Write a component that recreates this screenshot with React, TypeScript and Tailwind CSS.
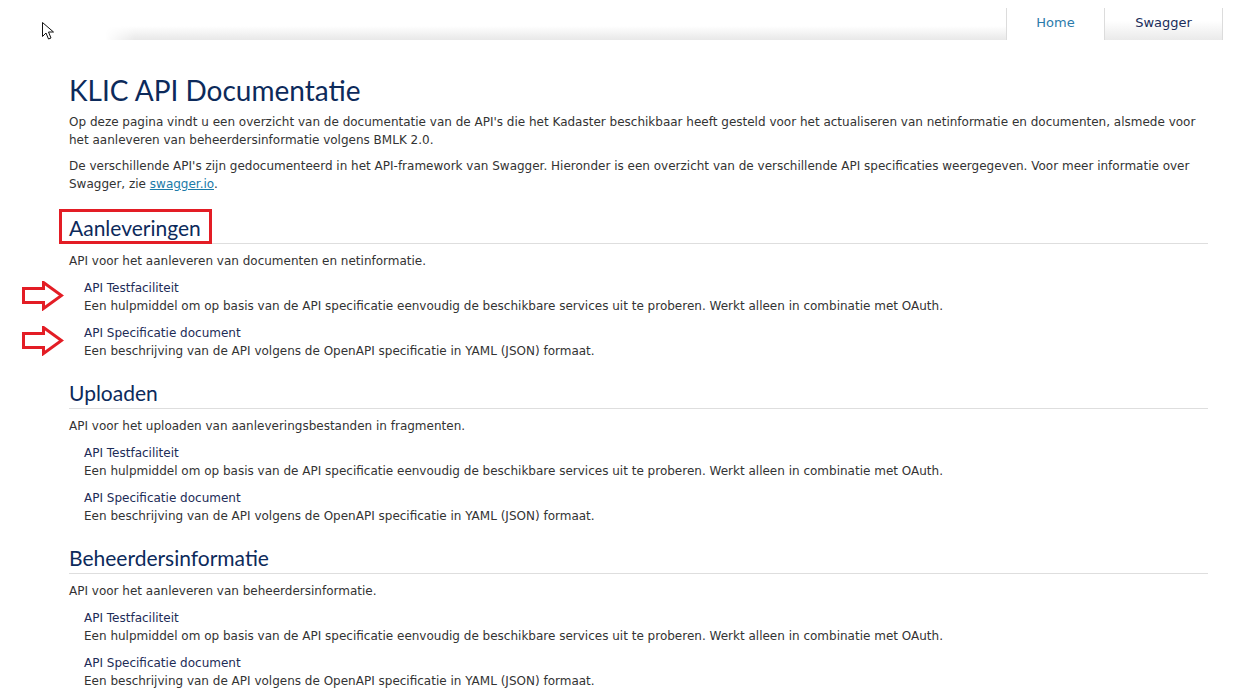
const body = { fontFamily: '"DejaVu Sans", Verdana, sans-serif' };
const heading = { fontFamily: 'Lato, "Open Sans", sans-serif' };

type Api = { title: string; desc: string };

type Section = {
  heading: string;
  intro: string;
  marked?: boolean;
};

const apis: Api[] = [
  {
    title: "API Testfaciliteit",
    desc: "Een hulpmiddel om op basis van de API specificatie eenvoudig de beschikbare services uit te proberen. Werkt alleen in combinatie met OAuth.",
  },
  {
    title: "API Specificatie document",
    desc: "Een beschrijving van de API volgens de OpenAPI specificatie in YAML (JSON) formaat.",
  },
];

const sections: Section[] = [
  { heading: "Aanleveringen", intro: "API voor het aanleveren van documenten en netinformatie.", marked: true },
  { heading: "Uploaden", intro: "API voor het uploaden van aanleveringsbestanden in fragmenten." },
  { heading: "Beheerdersinformatie", intro: "API voor het aanleveren van beheerdersinformatie." },
];

function RedArrow() {
  return (
    <svg width="42" height="30" viewBox="0 0 42 30" className="absolute left-[-47px] top-[2px]">
      <polygon
        points="1.5,7.5 21.5,7.5 21.5,1.5 39.5,14.5 21.5,27.5 21.5,21.5 1.5,21.5"
        fill="none"
        stroke="#e31d25"
        strokeWidth="3"
      />
    </svg>
  );
}

function Cursor() {
  return (
    <svg width="14" height="20" viewBox="0 0 14 20" className="absolute left-[41px] top-[21px]">
      <path
        d="M1.5 1.5 L1.5 15.5 L5 12 L7.5 18 L10 17 L7.5 11 L12.5 11 Z"
        fill="#fff"
        stroke="#111"
        strokeWidth="1"
        strokeLinejoin="round"
      />
    </svg>
  );
}

function Header() {
  return (
    <div className="relative flex h-[40px] items-end pr-[14px]">
      <Cursor />
      <div className="ml-[105px] h-[14px] flex-1 bg-gradient-to-b from-white to-[#e8e8e8] [mask-image:linear-gradient(to_right,transparent,black_30px)]" />
      <div className="flex h-[32px] border-l border-[#dcdcdc]">
        <a
          className="flex w-[98px] items-center justify-center border-r border-[#dcdcdc] bg-white pb-[2px] text-[13px] text-[#2b7bab]"
          style={body}
        >
          Home
        </a>
        <a
          className="flex w-[118px] items-center justify-center border-r border-[#dcdcdc] bg-gradient-to-b from-white from-40% to-[#eaeaea] pb-[2px] text-[13px] text-[#1a2d5a]"
          style={body}
        >
          Swagger
        </a>
      </div>
    </div>
  );
}

function ApiItem({ api, marked }: { api: Api; marked?: boolean }) {
  return (
    <div className="relative mt-[9px] pl-[15px]">
      {marked && <RedArrow />}
      <div className="text-[12px] leading-[18px] text-[#1d2c57]">{api.title}</div>
      <div className="text-[12px] leading-[18px] text-[#333]">{api.desc}</div>
    </div>
  );
}

export default function App() {
  return (
    <div className="min-h-[697px] bg-white" style={body}>
      <Header />
      <main className="ml-[69px] mr-[29px]">
        <h1 className="mt-[33px] text-[28px] leading-[34px] text-[#0c2a5b]" style={heading}>
          KLIC API Documentatie
        </h1>
        <p className="mt-[6px] text-[12px] leading-[18px] text-[#333]">
          Op deze pagina vindt u een overzicht van de documentatie van de API's die het Kadaster beschikbaar heeft gesteld voor het actualiseren van netinformatie en documenten, alsmede voor het aanleveren van beheerdersinformatie volgens BMLK 2.0.
        </p>
        <p className="mt-[8px] text-[12px] leading-[18px] text-[#333]">
          De verschillende API's zijn gedocumenteerd in het API-framework van Swagger. Hieronder is een overzicht van de verschillende API specificaties weergegeven. Voor meer informatie over Swagger, zie{" "}
          <a className="text-[#1b7aa8] underline">swagger.io</a>.
        </p>

        {sections.map((s, i) => (
          <section key={s.heading} className={i === 0 ? "mt-[20px]" : "mt-[18px]"}>
            <div className="relative border-b border-[#dedede]">
              {s.marked && (
                <div className="absolute left-[-10px] top-[-4px] h-[35px] w-[153px] border-[3px] border-[#e31d25]" />
              )}
              <h2 className="text-[21px] leading-[30px] text-[#0c2a5b]" style={heading}>
                {s.heading}
              </h2>
            </div>
            <p className="mt-[8px] text-[12px] leading-[18px] text-[#333]">{s.intro}</p>
            {apis.map((a) => (
              <ApiItem key={a.title} api={a} marked={s.marked} />
            ))}
          </section>
        ))}
      </main>
    </div>
  );
}
